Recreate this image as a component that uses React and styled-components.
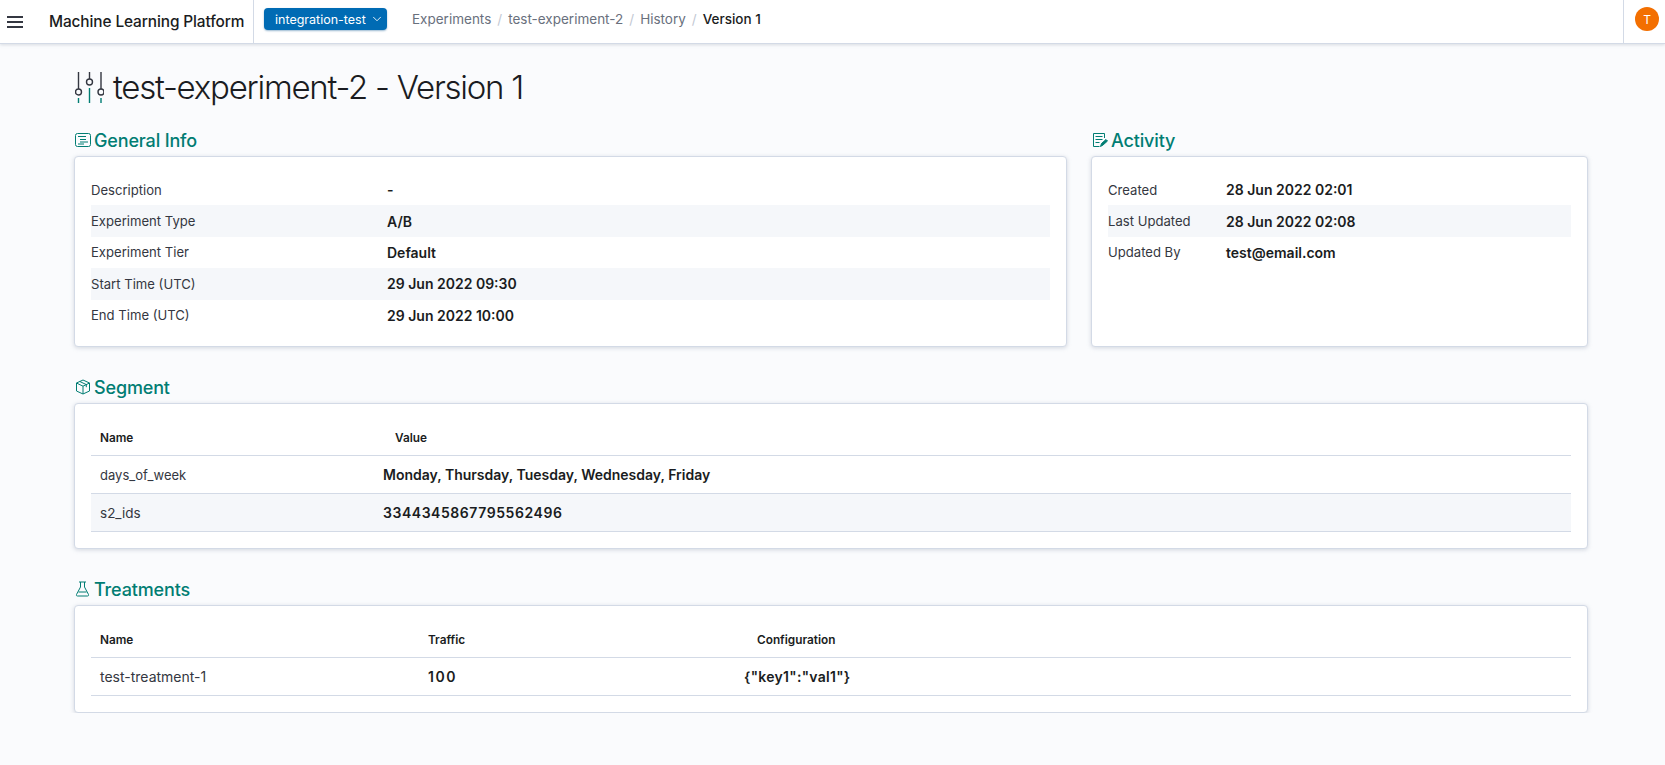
import React from "react";
import styled, { createGlobalStyle } from "styled-components";
import { ChevronDown } from "lucide-react";

const GlobalStyle = createGlobalStyle`
  html, body {
    margin: 0;
    padding: 0;
    background: #fafbfd;
    font-family: Inter, "Liberation Sans", sans-serif;
    color: #1a1c21;
  }
  * { box-sizing: border-box; }
`;

// Top bar
const TopBar = styled.header`
  display: flex;
  align-items: stretch;
  height: 44px;
  background: #fff;
  border-bottom: 1px solid #d3dae6;
  box-shadow: 0 1px 3px rgba(152, 162, 179, 0.35);
`;

const MenuButton = styled.div`
  display: flex;
  flex-direction: column;
  justify-content: center;
  gap: 3px;
  width: 49px;
  padding-left: 7px;
  span {
    display: block;
    width: 16px;
    height: 2px;
    background: #343741;
  }
`;

const Brand = styled.div`
  display: flex;
  align-items: center;
  width: 205px;
  height: 43px;
  border-right: 1px solid #d3dae6;
  font-size: 15.4px;
  font-weight: 500;
  letter-spacing: -0.1px;
`;

const EnvButton = styled.div`
  display: flex;
  align-items: center;
  justify-content: space-between;
  align-self: flex-start;
  width: 123px;
  height: 22px;
  margin: 8px 25px 0 10px;
  padding: 0 3px 0 11px;
  border-radius: 4px;
  background: #006bb4;
  color: #fff;
  font-size: 12.5px;
  box-shadow: 0 1px 2px rgba(0, 80, 140, 0.4);
`;

const Crumbs = styled.nav`
  display: flex;
  align-items: center;
  flex: 1;
  height: 38px;
  font-size: 13.5px;
`;

const Crumb = styled.span`
  color: ${(p) => (p.$current ? "#1a1c21" : "#69707d")};
  font-weight: ${(p) => (p.$current ? 500 : 400)};
`;

const Slash = styled.span`
  margin: 0 6px;
  color: #c2c8d3;
`;

const AvatarCell = styled.div`
  display: flex;
  justify-content: flex-end;
  width: 42px;
  height: 43px;
  padding: 7px 6px 0 0;
  border-left: 1px solid #d3dae6;
`;

const Avatar = styled.div`
  display: flex;
  align-items: center;
  justify-content: center;
  width: 24px;
  height: 24px;
  border-radius: 50%;
  background: #f36f00;
  color: #fff;
  font-size: 12px;
`;

// Page body
const Page = styled.main`
  width: 1514px;
  margin-left: 74px;
`;

const PageTitle = styled.h1`
  display: flex;
  align-items: center;
  gap: 9px;
  height: 36px;
  margin: 25px 0 0 1px;
  font-size: 33px;
  font-weight: 300;
  letter-spacing: -1.25px;
  white-space: nowrap;
`;

const TopGrid = styled.div`
  display: grid;
  grid-template-columns: 993px 497px;
  gap: 24px;
  margin-top: 21px;
`;

const Section = styled.section`
  margin-top: ${(p) => p.$top || 0}px;
`;

const SectionTitle = styled.h2`
  display: flex;
  align-items: center;
  gap: 3px;
  height: 30px;
  margin: 0 0 0 1px;
  padding-bottom: 2px;
  color: #017d73;
  font-size: 18px;
  font-weight: 500;
  letter-spacing: -0.15px;
`;

const Card = styled.div`
  height: ${(p) => p.$height}px;
  padding: ${(p) => p.$pad}px 16px 0;
  background: #fff;
  border: 1px solid #d3dae6;
  border-radius: 4px;
  box-shadow: 0 1px 4px rgba(152, 162, 179, 0.4);
`;

const InfoRow = styled.div`
  display: grid;
  grid-template-columns: ${(p) => p.$label}px 1fr;
  align-items: center;
  height: 31.4px;
  background: ${(p) => (p.$striped ? "#f5f7fa" : "transparent")};
`;

const InfoLabel = styled.div`
  color: #343741;
  font-size: 13.1px;
`;

const Strong = styled.div`
  padding-left: ${(p) => p.$indent || 0}px;
  font-size: 14px;
  font-weight: 600;
  letter-spacing: ${(p) => p.$spacing || 0}px;
`;

const TableHead = styled.div`
  display: grid;
  grid-template-columns: ${(p) => p.$cols};
  align-items: center;
  height: 52px;
  padding: 16px 0 0 9px;
  border-bottom: 1px solid #d3dae6;
  font-size: 11.8px;
  font-weight: 600;
`;

const HeadCell = styled.div`
  padding-left: ${(p) => p.$indent || 0}px;
`;

const TableRow = styled.div`
  display: grid;
  grid-template-columns: ${(p) => p.$cols};
  align-items: center;
  height: 38px;
  padding-left: 9px;
  border-bottom: 1px solid #d3dae6;
  background: ${(p) => (p.$striped ? "#f5f7fa" : "transparent")};
`;

const NameCell = styled.div`
  color: #343741;
  font-size: ${(p) => p.$size || 13.5}px;
`;

const Glyph = styled.svg`
  flex: none;
  fill: none;
  stroke: ${(p) => p.$stroke || "#017d73"};
  stroke-width: 1;
`;

function SlidersIcon() {
  return (
    <Glyph width="29" height="31" viewBox="0 0 29 31" $stroke="#343741">
      <path d="M3.500 0v17M14.500 0v7M26 0v17" strokeWidth="1.400" />
      <circle cx="3.500" cy="20" r="3" strokeWidth="1.400" />
      <circle cx="14.500" cy="10" r="3" strokeWidth="1.400" />
      <circle cx="26" cy="20" r="3" strokeWidth="1.400" />
      <path d="M3.500 26v5M14.500 16v15M26 26v5" stroke="#017d73" strokeWidth="1.400" />
    </Glyph>
  );
}

function InfoIcon() {
  return (
    <Glyph width="16" height="16" viewBox="0 0 16 16">
      <rect x="0.500" y="1.500" width="15" height="13" rx="2" />
      <path d="M3 4.500h8M5 7.500h6M5 10h8M3 12h6" />
    </Glyph>
  );
}

function ActivityIcon() {
  return (
    <Glyph width="16" height="16" viewBox="0 0 16 16">
      <path d="M12.500 6V1.500h-11v13h6" />
      <path d="M3.500 4.500h7M3.500 7.500h7M3.500 10.500h4" />
      <path d="M8.500 14.500l1-3 4.500-4 1.500 1.500-4.500 4z" fill="#017d73" />
    </Glyph>
  );
}

function BoxIcon() {
  return (
    <Glyph width="16" height="16" viewBox="0 0 16 16">
      <path d="M8 1l6.500 3v8L8 15l-6.500-3V4z" />
      <path d="M1.500 4L8 7.200 14.500 4M8 7.200V15M4.800 2.500l6.500 3.100v2.600" />
    </Glyph>
  );
}

function BeakerIcon() {
  return (
    <Glyph width="16" height="16" viewBox="0 0 16 16">
      <path d="M4 1h7M5.500 1v5L1.500 13.500c-.4.800 0 1.500 1 1.500h10c1 0 1.400-.7 1-1.500L9.500 6V1" />
      <path d="M3.500 11h8" />
    </Glyph>
  );
}

const generalInfo = [
  ["Description", "-"],
  ["Experiment Type", "A/B"],
  ["Experiment Tier", "Default"],
  ["Start Time (UTC)", "29 Jun 2022 09:30"],
  ["End Time (UTC)", "29 Jun 2022 10:00"],
];

const activity = [
  ["Created", "28 Jun 2022 02:01"],
  ["Last Updated", "28 Jun 2022 02:08"],
  ["Updated By", "test@email.com"],
];

const segmentCols = "283px 1fr";
const treatmentCols = "328px 295px 1fr";

export default function App() {
  return (
    <>
      <GlobalStyle />
      <TopBar>
        <MenuButton>
          <span />
          <span />
          <span />
        </MenuButton>
        <Brand>Machine Learning Platform</Brand>
        <EnvButton>
          integration-test
          <ChevronDown size={14} strokeWidth={1.5} />
        </EnvButton>
        <Crumbs>
          <Crumb>Experiments</Crumb>
          <Slash>/</Slash>
          <Crumb>test-experiment-2</Crumb>
          <Slash>/</Slash>
          <Crumb>History</Crumb>
          <Slash>/</Slash>
          <Crumb $current>Version 1</Crumb>
        </Crumbs>
        <AvatarCell>
          <Avatar>T</Avatar>
        </AvatarCell>
      </TopBar>

      <Page>
        <PageTitle>
          <SlidersIcon />
          test-experiment-2 - Version 1
        </PageTitle>

        <TopGrid>
          <Section>
            <SectionTitle>
              <InfoIcon />
              General Info
            </SectionTitle>
            <Card $height={191} $pad={17}>
              {generalInfo.map(([label, value], i) => (
                <InfoRow key={label} $label={296} $striped={i % 2 === 1}>
                  <InfoLabel>{label}</InfoLabel>
                  <Strong>{value}</Strong>
                </InfoRow>
              ))}
            </Card>
          </Section>
          <Section>
            <SectionTitle>
              <ActivityIcon />
              Activity
            </SectionTitle>
            <Card $height={191} $pad={17}>
              {activity.map(([label, value], i) => (
                <InfoRow key={label} $label={118} $striped={i % 2 === 1}>
                  <InfoLabel>{label}</InfoLabel>
                  <Strong>{value}</Strong>
                </InfoRow>
              ))}
            </Card>
          </Section>
        </TopGrid>

        <Section $top={26}>
          <SectionTitle>
            <BoxIcon />
            Segment
          </SectionTitle>
          <Card $height={146} $pad={0}>
            <TableHead $cols={segmentCols}>
              <HeadCell>Name</HeadCell>
              <HeadCell $indent={12}>Value</HeadCell>
            </TableHead>
            <TableRow $cols={segmentCols}>
              <NameCell $size={13}>days_of_week</NameCell>
              <Strong>Monday, Thursday, Tuesday, Wednesday, Friday</Strong>
            </TableRow>
            <TableRow $cols={segmentCols} $striped>
              <NameCell>s2_ids</NameCell>
              <Strong $spacing={0.55}>3344345867795562496</Strong>
            </TableRow>
          </Card>
        </Section>

        <Section $top={26}>
          <SectionTitle>
            <BeakerIcon />
            Treatments
          </SectionTitle>
          <Card $height={108} $pad={0}>
            <TableHead $cols={treatmentCols}>
              <HeadCell>Name</HeadCell>
              <HeadCell>Traffic</HeadCell>
              <HeadCell $indent={34}>Configuration</HeadCell>
            </TableHead>
            <TableRow $cols={treatmentCols}>
              <NameCell $size={14}>test-treatment-1</NameCell>
              <Strong $spacing={1.5}>100</Strong>
              <Strong $indent={21} $spacing={0.3}>{'{"key1":"val1"}'}</Strong>
            </TableRow>
          </Card>
        </Section>
      </Page>
    </>
  );
}
